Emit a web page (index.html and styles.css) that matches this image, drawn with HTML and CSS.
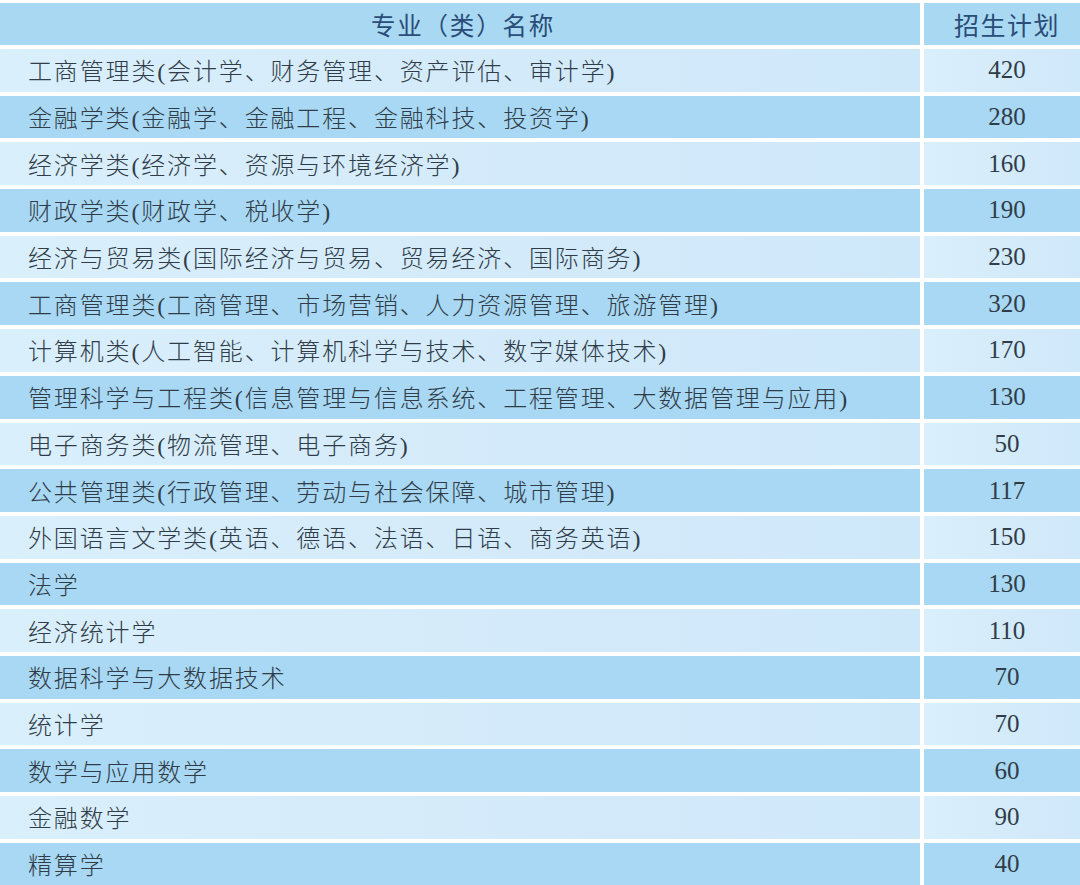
FILE: index.html
```html
<!DOCTYPE html>
<html lang="zh-CN">
<head>
<meta charset="utf-8">
<title>招生计划</title>
<link rel="stylesheet" href="styles.css">
</head>
<body>
<div class="table">
  <div class="cell head name">专业（类）名称</div><div class="cell head num">招生计划</div>
  <div class="cell light name">工商管理类(会计学、财务管理、资产评估、审计学)</div><div class="cell light num">420</div>
  <div class="cell dark name">金融学类(金融学、金融工程、金融科技、投资学)</div><div class="cell dark num">280</div>
  <div class="cell light name">经济学类(经济学、资源与环境经济学)</div><div class="cell light num">160</div>
  <div class="cell dark name">财政学类(财政学、税收学)</div><div class="cell dark num">190</div>
  <div class="cell light name">经济与贸易类(国际经济与贸易、贸易经济、国际商务)</div><div class="cell light num">230</div>
  <div class="cell dark name">工商管理类(工商管理、市场营销、人力资源管理、旅游管理)</div><div class="cell dark num">320</div>
  <div class="cell light name">计算机类(人工智能、计算机科学与技术、数字媒体技术)</div><div class="cell light num">170</div>
  <div class="cell dark name">管理科学与工程类(信息管理与信息系统、工程管理、大数据管理与应用)</div><div class="cell dark num">130</div>
  <div class="cell light name">电子商务类(物流管理、电子商务)</div><div class="cell light num">50</div>
  <div class="cell dark name">公共管理类(行政管理、劳动与社会保障、城市管理)</div><div class="cell dark num">117</div>
  <div class="cell light name">外国语言文学类(英语、德语、法语、日语、商务英语)</div><div class="cell light num">150</div>
  <div class="cell dark name">法学</div><div class="cell dark num">130</div>
  <div class="cell light name">经济统计学</div><div class="cell light num">110</div>
  <div class="cell dark name">数据科学与大数据技术</div><div class="cell dark num">70</div>
  <div class="cell light name">统计学</div><div class="cell light num">70</div>
  <div class="cell dark name">数学与应用数学</div><div class="cell dark num">60</div>
  <div class="cell light name">金融数学</div><div class="cell light num">90</div>
  <div class="cell dark name">精算学</div><div class="cell dark num">40</div>
</div>
</body>
</html>
```
FILE: styles.css
```css
html, body {
  margin: 0;
  padding: 0;
  background: #ffffff;
  overflow: hidden;
}
body {
  width: 1080px;
  height: 885px;
}
.table {
  display: grid;
  grid-template-columns: 920px 166px;
  grid-template-rows: 42px repeat(18, 42.7px);
  column-gap: 4px;
  row-gap: 4px;
  margin-top: 3px;
  width: 1090px;
}
.cell {
  display: flex;
  align-items: center;
  color: #303c48;
  font-family: "Liberation Serif", "Noto Sans CJK SC", serif;
  font-size: 24px;
}
.light {
  background: linear-gradient(90deg, #daeffc 0%, #d3eafa 60%, #cfe8f9 100%);
}
.dark {
  background: #a8d8f3;
}
.head {
  background: #a9d8f2;
  justify-content: center;
  font-family: "Noto Sans CJK SC", sans-serif;
  font-size: 24.5px;
  letter-spacing: 1.8px;
  color: #2a4c78;
}
.name {
  padding-left: 28px;
  padding-bottom: 1px;
  letter-spacing: 1.85px;
  font-weight: 300;
}
.head.name {
  padding-left: 6px;
  padding-bottom: 0;
  font-weight: 400;
  letter-spacing: 1.8px;
}
.num {
  justify-content: center;
  font-size: 25px;
  letter-spacing: 0;
}
.head.num {
  padding-left: 0;
  letter-spacing: 1.5px;
}
```
